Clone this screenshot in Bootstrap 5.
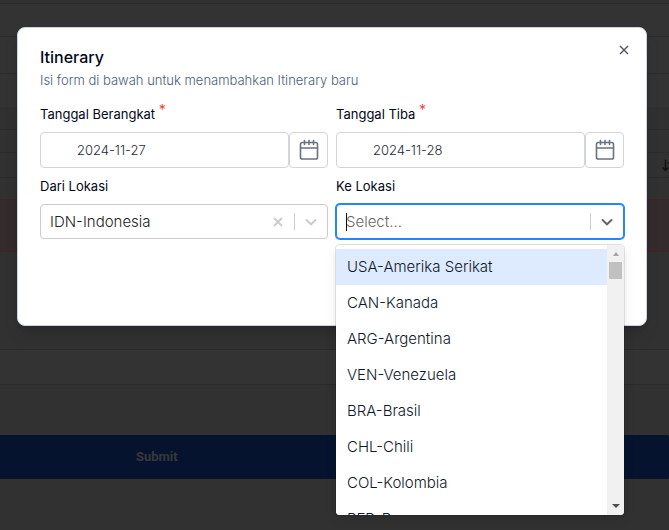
<!DOCTYPE html>
<html lang="id">
<head>
<meta charset="utf-8">
<meta name="viewport" content="width=device-width, initial-scale=1">
<title>Itinerary</title>
<link href="https://cdn.jsdelivr.net/npm/bootstrap@5.3.0/dist/css/bootstrap.min.css" rel="stylesheet">
<style>
  body { font-family: Inter, "Liberation Sans", sans-serif; font-size: 13px; line-height: 20px; color: #0f172a; background: #313131; min-height: 100vh; overflow: hidden; }
  .backdrop-row { border-bottom: 1px solid #2b2b2b; }
  .row-first { height: 4px; }
  .row-std { height: 33px; background: #333; }
  .row-mid { height: 37px; background: #333; }
  .row-tall { height: 56px; background: linear-gradient(#333 33px, #303030 33px); }
  .row-sub { height: 23px; }
  .row-head { height: 25px; border-color: #292929; }
  .row-slim { height: 22px; border-color: #4a2020; }
  .row-alert { height: 52px; background: #342c2c; border-color: #4a2020; }
  .row-gap { height: 98px; }
  .row-last { height: 35px; background: #333; }
  .submit-btn { height: 44px; margin-top: 50px; padding-left: 136px; background: #05132e; color: #383838; font-family: Roboto, sans-serif; font-size: 13px; font-weight: 700; border-radius: 0 2px 2px 0; }
  .overlay-layer { padding: 27px 22px 0 17px; }
  .dialog-box { min-height: 299px; padding: 17px 22px; background: #fff; border: 1px solid #cbd5e1; border-radius: 8px; box-shadow: 0 10px 15px -3px rgba(0,0,0,.15), 0 4px 6px -4px rgba(0,0,0,.15); }
  .dialog-title { font-size: 16px; line-height: 24px; font-weight: 500; color: #020617; }
  .dialog-note { color: #4b5d78; font-weight: 300; margin-top: 1px; }
  .dialog-close { top: 15px; right: 15px; width: 14px; height: 14px; color: #4b5563; }
  .form-cols { margin-top: 14px; column-gap: 8px; row-gap: 8px; grid-template-columns: repeat(2, minmax(0, 1fr)); }
  .field-label { color: #020617; margin-bottom: 8px; }
  .req-star { color: #ef4444; font-size: 14px; top: -4px; line-height: 0; }
  .date-input { width: 0; height: 36px; padding: 0 36px; font-size: 13px; font-weight: 300; color: #1f2937; border: 1px solid #d1d5db; border-radius: 4px; }
  .date-btn { width: 39px; height: 36px; border: 1px solid #d1d5db; border-radius: 4px; color: #6b7280; background: #fff; }
  .pick-box { height: 35px; border: 1px solid #ccc; border-radius: 4px; background: #fff; }
  .pick-box.is-open { border-color: #2684ff; box-shadow: 0 0 0 1px #2684ff; }
  .pick-native, .pick-input { appearance: none; width: 0; border: 0; outline: 0; background: transparent; font-size: 15px; font-weight: 300; padding: 0 0 0 9px; color: #222; }
  .pick-input::placeholder { color: #666; opacity: 1; }
  .pick-btn { width: 32px; color: #ccc; }
  .pick-btn.is-dark { color: #666; }
  .pick-sep { width: 1px; margin: 8px 0; background: #ccc; }
  .text-caret { left: 9px; top: 8px; width: 1px; height: 18px; background: #111; }
  .option-menu { top: 100%; left: -1px; right: -1px; height: 270px; margin-top: 7px; background: #fff; border-radius: 4px; box-shadow: 0 0 0 1px rgba(0,0,0,.1), 0 4px 11px rgba(0,0,0,.1); z-index: 5; }
  .option-list { padding-top: 4px; }
  .option-item { height: 36px; padding: 0 11px; border: 0; background: #fff; font-size: 15px; font-weight: 300; color: #0f172a; text-align: left; flex: none; }
  .option-item.is-active { background: #deebff; }
  .scroll-rail { width: 17px; padding: 5px 0; background: #f1f1f1; }
  .scroll-thumb { width: 13px; height: 17px; background: #c1c1c1; margin-top: 5px; }
  .sort-mark { color: #111; width: 14px; margin-right: -7px; }
</style>
</head>
<body>
<main aria-hidden="true">
  <div class="backdrop-row row-first"></div>
  <div class="backdrop-row row-std"></div>
  <div class="backdrop-row row-mid"></div>
  <div class="backdrop-row row-tall"></div>
  <div class="backdrop-row row-sub"></div>
  <div class="backdrop-row row-head d-flex justify-content-end align-items-center">
    <svg class="sort-mark" height="14" viewBox="0 0 14 14" fill="none" stroke="currentColor" stroke-width="1.500"><path d="M3.500 1.500v11M.5 9.500l3 3 3-3M9.500 12.500V2M6 5.500l3.500-3.500L13 5.500"/></svg>
  </div>
  <div class="backdrop-row row-slim"></div>
  <div class="backdrop-row row-alert"></div>
  <div class="backdrop-row row-gap"></div>
  <div class="backdrop-row row-last"></div>
  <button type="button" class="submit-btn btn w-100 text-start border-0 py-0" tabindex="-1">Submit</button>
</main>

<div class="overlay-layer position-absolute top-0 start-0 w-100">
  <section class="dialog-box position-relative" role="dialog" aria-labelledby="dialogTitle">
    <h1 class="dialog-title mb-0" id="dialogTitle">Itinerary</h1>
    <p class="dialog-note mb-0">Isi form di bawah untuk menambahkan Itinerary baru</p>
    <button type="button" class="dialog-close btn p-0 border-0 position-absolute d-flex" aria-label="Close">
      <svg width="14" height="14" viewBox="0 0 14 14" fill="none" stroke="currentColor" stroke-width="1.400"><path d="M3 3l8 8M11 3l-8 8"/></svg>
    </button>
    <form class="form-cols d-grid">
      <div>
        <label class="field-label d-block" for="departDate">Tanggal Berangkat <span class="req-star position-relative">*</span></label>
        <div class="d-flex">
          <input class="date-input flex-grow-1" id="departDate" type="text" value="2024-11-27">
          <button type="button" class="date-btn d-flex align-items-center justify-content-center p-0" aria-label="Kalender">
            <svg width="22" height="22" viewBox="0 0 22 22" fill="none" stroke="currentColor" stroke-width="1.600" stroke-linecap="round"><rect x="2.500" y="3.500" width="17" height="16.500" rx="1.800"/><path d="M2.500 9h17M6.500 1.500v4M11 1.500v4M15.500 1.500v4"/></svg>
          </button>
        </div>
      </div>
      <div>
        <label class="field-label d-block" for="arriveDate">Tanggal Tiba <span class="req-star position-relative">*</span></label>
        <div class="d-flex">
          <input class="date-input flex-grow-1" id="arriveDate" type="text" value="2024-11-28">
          <button type="button" class="date-btn d-flex align-items-center justify-content-center p-0" aria-label="Kalender">
            <svg width="22" height="22" viewBox="0 0 22 22" fill="none" stroke="currentColor" stroke-width="1.600" stroke-linecap="round"><rect x="2.500" y="3.500" width="17" height="16.500" rx="1.800"/><path d="M2.500 9h17M6.500 1.500v4M11 1.500v4M15.500 1.500v4"/></svg>
          </button>
        </div>
      </div>
      <div>
        <label class="field-label d-block" for="fromPlace">Dari Lokasi</label>
        <div class="pick-box d-flex">
          <select class="pick-native flex-grow-1" id="fromPlace"><option>IDN-Indonesia</option></select>
          <button type="button" class="pick-btn btn p-0 border-0 d-flex align-items-center justify-content-center" aria-label="Hapus">
            <svg width="10" height="10" viewBox="0 0 10 10" fill="none" stroke="currentColor" stroke-width="2"><path d="M1 1l8 8M9 1L1 9"/></svg>
          </button>
          <span class="pick-sep"></span>
          <button type="button" class="pick-btn btn p-0 border-0 d-flex align-items-center justify-content-center" aria-label="Buka">
            <svg width="12" height="8" viewBox="0 0 12 8" fill="none" stroke="currentColor" stroke-width="2" stroke-linecap="round"><path d="M1.500 2L6 6.300 10.500 2"/></svg>
          </button>
        </div>
      </div>
      <div>
        <label class="field-label d-block" for="toPlace">Ke Lokasi</label>
        <div class="pick-box is-open d-flex position-relative">
          <input class="pick-input flex-grow-1" id="toPlace" type="text" placeholder="Select..." role="combobox" aria-expanded="true" aria-controls="toList">
          <span class="text-caret position-absolute"></span>
          <span class="pick-sep"></span>
          <button type="button" class="pick-btn is-dark btn p-0 border-0 d-flex align-items-center justify-content-center" aria-label="Buka">
            <svg width="12" height="8" viewBox="0 0 12 8" fill="none" stroke="currentColor" stroke-width="2" stroke-linecap="round"><path d="M1.500 2L6 6.300 10.500 2"/></svg>
          </button>
          <div class="option-menu position-absolute d-flex overflow-hidden">
            <div class="option-list flex-grow-1 d-flex flex-column overflow-hidden" id="toList" role="listbox">
              <button type="button" role="option" class="option-item is-active">USA-Amerika Serikat</button>
              <button type="button" role="option" class="option-item">CAN-Kanada</button>
              <button type="button" role="option" class="option-item">ARG-Argentina</button>
              <button type="button" role="option" class="option-item">VEN-Venezuela</button>
              <button type="button" role="option" class="option-item">BRA-Brasil</button>
              <button type="button" role="option" class="option-item">CHL-Chili</button>
              <button type="button" role="option" class="option-item">COL-Kolombia</button>
              <button type="button" role="option" class="option-item">PER-Peru</button>
            </div>
            <div class="scroll-rail d-flex flex-column align-items-center">
              <svg width="8" height="7" viewBox="0 0 8 7" fill="#a3a3a3"><path d="M1 6l3-4 3 4z"/></svg>
              <span class="scroll-thumb"></span>
              <svg class="mt-auto" width="8" height="7" viewBox="0 0 8 7" fill="#505050"><path d="M0 1h8L4 5z"/></svg>
            </div>
          </div>
        </div>
      </div>
    </form>
  </section>
</div>
<script src="https://cdn.jsdelivr.net/npm/bootstrap@5.3.0/dist/js/bootstrap.bundle.min.js"></script>
</body>
</html>
